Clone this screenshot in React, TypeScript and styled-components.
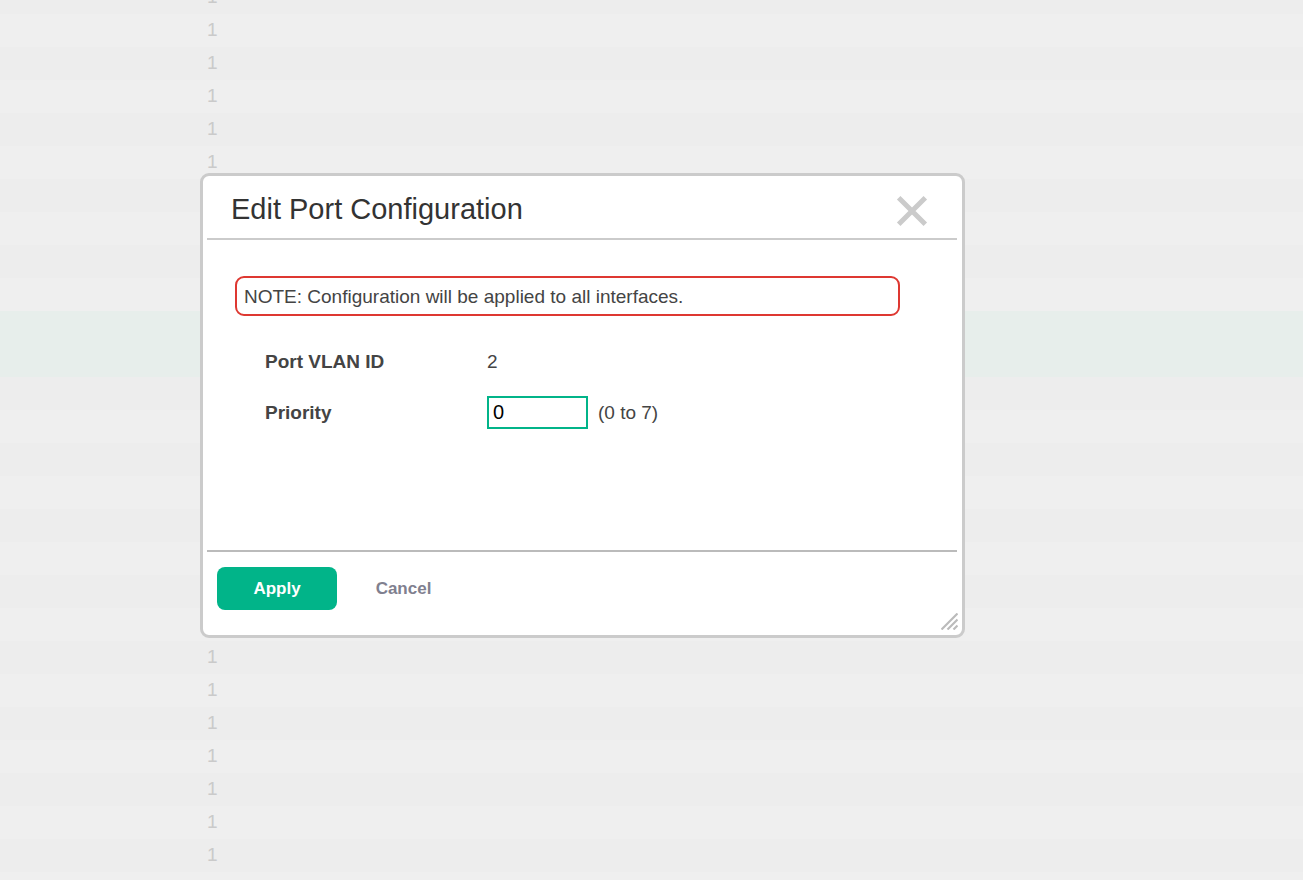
import React, { useState } from 'react';
import styled, { createGlobalStyle } from 'styled-components';

const GlobalStyle = createGlobalStyle`
  *, *::before, *::after { box-sizing: border-box; }
  body {
    margin: 0;
    background: #efefef;
    font-family: Arial, "Liberation Sans", sans-serif;
  }
`;

const Page = styled.main`
  position: relative;
  min-height: 100vh;
  max-height: 100vh;
  overflow: hidden;
`;

const PortTable = styled.table`
  width: 100%;
  margin-top: -19px;
  border-collapse: collapse;
  table-layout: fixed;
  font-size: 19px;
  line-height: 31px;
  color: #cacaca;
`;

const PortRow = styled.tr<{ $selected: boolean }>`
  height: 33px;
  background: ${({ $selected }) => ($selected ? '#e7eeeb' : '#efefef')};

  &:nth-child(odd) {
    background: ${({ $selected }) => ($selected ? '#e7eeeb' : '#ededed')};
  }
`;

const PortCell = styled.td`
  height: 33px;
  padding: 0 0 2px 207px;
`;

const Dialog = styled.section`
  position: absolute;
  top: 173px;
  left: 200px;
  display: flex;
  flex-direction: column;
  width: 765px;
  max-width: calc(100% - 200px);
  min-height: 465px;
  padding: 0 5px 0 4px;
  border: 3px solid #cbcbcb;
  border-radius: 9px;
  background: #fff;
  color: #444;
`;

const DialogHeader = styled.header`
  display: flex;
  align-items: center;
  justify-content: space-between;
  height: 64px;
  padding: 4px 28px 0 24px;
  border-bottom: 2px solid #cbcbcb;
`;

const Title = styled.h1`
  margin: 0;
  font-size: 29px;
  font-weight: 400;
  line-height: 34px;
  color: #333;
`;

const CloseButton = styled.button`
  display: flex;
  margin: 4px 0 0;
  padding: 0;
  border: 0;
  background: none;
  color: #cbcbcb;
  cursor: pointer;
`;

const DialogBody = styled.div`
  flex: 1;
  padding: 36px 57px 0 28px;
  font-size: 19px;
  line-height: 22px;
`;

const Note = styled.p`
  margin: 0 0 29px;
  padding: 8px 7px 6px;
  border: 2px solid #de3831;
  border-radius: 9px;
`;

const Fields = styled.form`
  display: grid;
  grid-template-columns: 222px 1fr;
  row-gap: 18px;
  align-items: center;
  padding-left: 30px;
`;

const FieldLabel = styled.label`
  font-weight: 700;
`;

const FieldValue = styled.div`
  display: flex;
  align-items: center;
  gap: 10px;
  height: 33px;
`;

const NumberInput = styled.input`
  width: 101px;
  height: 33px;
  padding: 0 4px;
  border: 2px solid #01b489;
  border-radius: 0;
  outline: none;
  background: #fff;
  color: #000;
  font: 20px Arial, "Liberation Sans", sans-serif;
`;

const DialogFooter = styled.footer`
  display: flex;
  align-items: flex-start;
  height: 85px;
  padding: 15px 0 0 10px;
  border-top: 2px solid #bbb;
`;

const ActionButton = styled.button<{ $primary?: boolean }>`
  width: ${({ $primary }) => ($primary ? '120px' : '133px')};
  height: 43px;
  padding: 0;
  border: 0;
  border-radius: 8px;
  background: ${({ $primary }) => ($primary ? '#01b489' : 'transparent')};
  color: ${({ $primary }) => ($primary ? '#fff' : '#80808f')};
  font: 700 17px Arial, "Liberation Sans", sans-serif;
  cursor: pointer;
`;

const ResizeGrip = styled.svg`
  position: absolute;
  right: 4px;
  bottom: 5px;
  cursor: nwse-resize;
`;

const SELECTED_ROWS = [10, 11];
const portPriorities = Array.from({ length: 28 }, () => 1);

export default function App() {
  const [priority, setPriority] = useState('0');

  return (
    <>
      <GlobalStyle />
      <Page>
        <PortTable>
          <tbody>
            {portPriorities.map((value, index) => (
              <PortRow key={index} $selected={SELECTED_ROWS.includes(index)}>
                <PortCell>{index < 27 ? value : null}</PortCell>
              </PortRow>
            ))}
          </tbody>
        </PortTable>

        <Dialog role="dialog" aria-labelledby="dialog-title">
          <DialogHeader>
            <Title id="dialog-title">Edit Port Configuration</Title>
            <CloseButton type="button" aria-label="Close">
              <svg width="34" height="34" viewBox="0 0 34 34" fill="none" stroke="currentColor" strokeWidth="5">
                <path d="M3.7 3.7 30.3 30.3M30.3 3.7 3.7 30.3" />
              </svg>
            </CloseButton>
          </DialogHeader>

          <DialogBody>
            <Note>NOTE: Configuration will be applied to all interfaces.</Note>
            <Fields id="port-form" onSubmit={(event) => event.preventDefault()}>
              <FieldLabel as="span">Port VLAN ID</FieldLabel>
              <FieldValue>2</FieldValue>
              <FieldLabel htmlFor="priority">Priority</FieldLabel>
              <FieldValue>
                <NumberInput
                  id="priority"
                  type="text"
                  inputMode="numeric"
                  aria-describedby="priority-range"
                  value={priority}
                  onChange={(event) => setPriority(event.target.value)}
                />
                <span id="priority-range">(0 to 7)</span>
              </FieldValue>
            </Fields>
          </DialogBody>

          <DialogFooter>
            <ActionButton type="submit" form="port-form" $primary>
              Apply
            </ActionButton>
            <ActionButton type="button">Cancel</ActionButton>
          </DialogFooter>

          <ResizeGrip width="17" height="17" viewBox="0 0 17 17" fill="none" stroke="#bbb" strokeWidth="2.2" aria-hidden="true">
            <path d="M0.5 16.5 16.5 0.5M6.5 16.5 16.5 6.5M12.5 16.5 16.5 12.5" />
          </ResizeGrip>
        </Dialog>
      </Page>
    </>
  );
}
